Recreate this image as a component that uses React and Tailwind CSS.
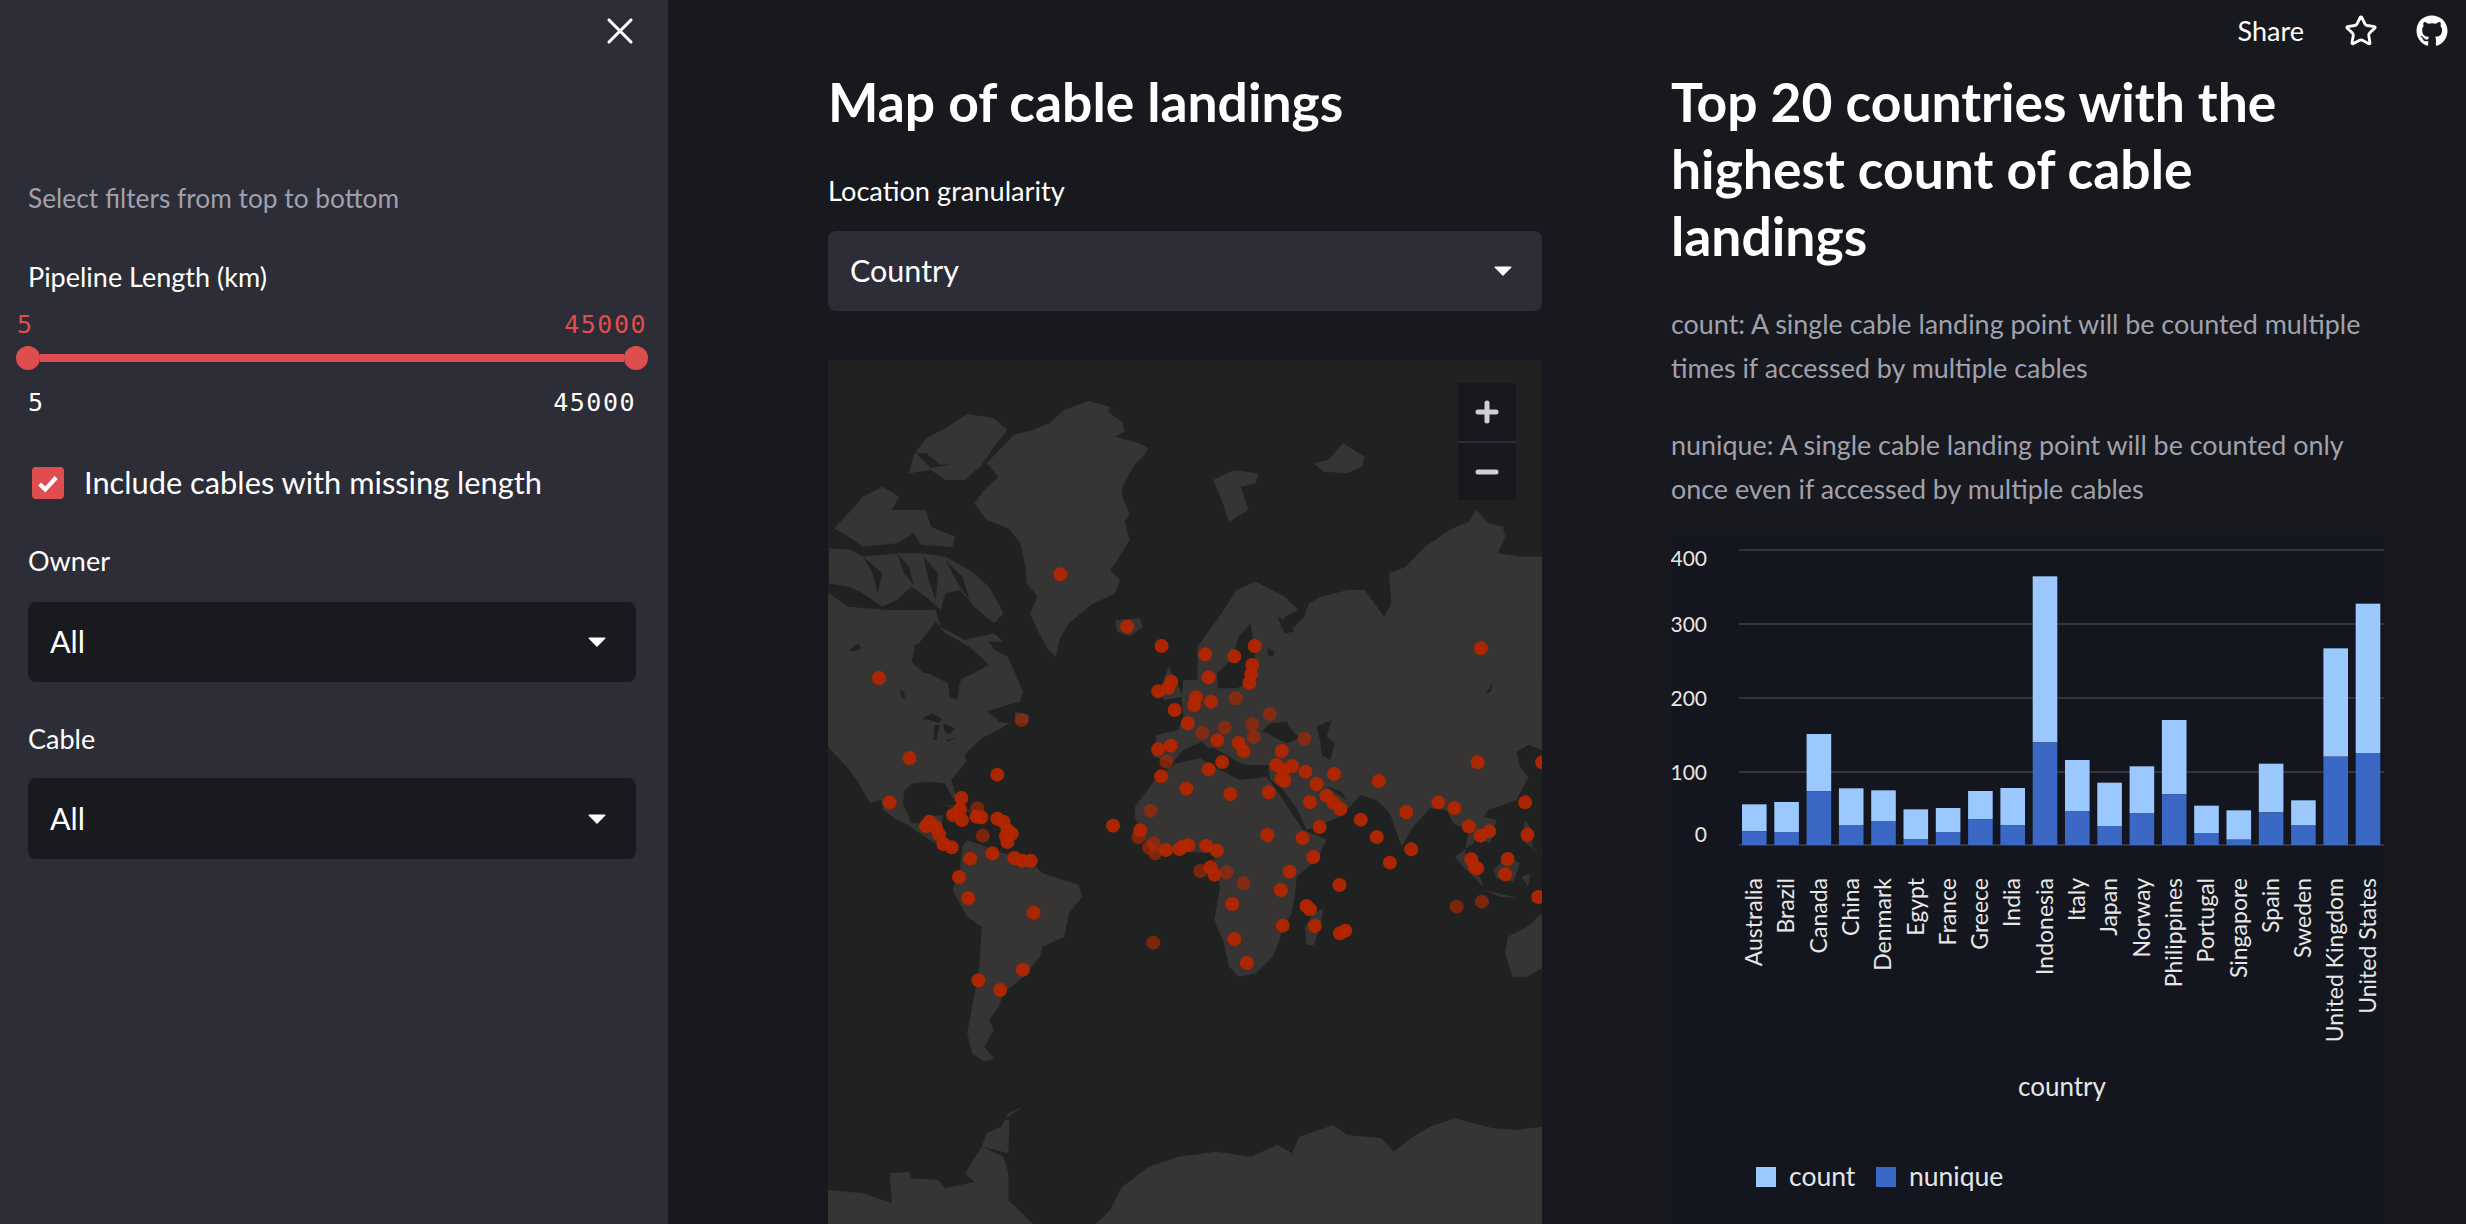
import React from 'react';
import { Star, X } from 'lucide-react';
import { FaGithub } from 'react-icons/fa';

// map data is read straight off crops of the picture, so each group has its own transform
const Z3 = 'translate(800 340) scale(.4847 .3333)';
const Z4 = 'translate(800 780) scale(.4847 .3333)';
const Z9 = 'translate(1100 680) scale(.3333)';
const Z10 = 'translate(828 640) scale(.3333)';

const LAND = '#363534';
const SEA = '#202222';

const land3 = [
  '595,183 640,200 635,215 665,245 670,275 650,290 700,310 718,325 710,345 690,375 680,400 665,440 665,470 680,520 670,545 680,600 655,660 640,690 660,720 650,760 600,795 555,850 535,900 528,950 510,925 490,870 475,820 490,770 468,730 465,680 455,610 430,565 385,540 360,490 380,450 410,410 385,370 425,310 440,285 480,270 515,250 545,210',
  '345,222 400,235 428,270 400,320 375,375 340,420 300,420 270,390 225,400 235,345 260,295 300,265',
  '170,440 205,470 190,510 260,510 270,560 320,590 315,620 250,615 235,580 200,610 130,620 100,590 70,565 100,520 130,470',
  '60,625 105,630 130,650 200,640 250,640 300,650 350,690 390,740 420,820 400,850 360,800 330,750 300,760 290,810 260,770 230,740 200,780 170,800 130,760 100,740 60,730',
  '58,760 100,800 180,810 280,810 290,860 340,900 400,880 420,905 58,905',
  '895,390 945,400 940,430 910,440 925,510 885,545 870,480 852,420',
  '1060,370 1090,360 1120,310 1165,350 1160,380 1130,400 1080,395',
  '650,840 700,835 708,860 680,890 655,875',
  '745,1040 760,980 775,1020 790,1070 750,1080',
  '820,920 870,820 900,750 940,725 1000,770 1028,810 1000,830 990,860 1010,875 1040,830 1050,790 1075,770 1130,750 1165,750 1205,830 1220,790 1215,700 1250,680 1290,620 1340,570 1380,545 1395,510 1420,550 1450,560 1455,590 1440,640 1490,650 1531,650 1531,1200 820,1200',
];

const sea3 = [
  '280,845 240,920 230,965 255,1000 300,1000 310,1060 325,1080 330,1020 390,975 350,920 300,880',
  '930,850 905,890 890,960 860,1000 862,1045 900,1045 945,1020 940,970',
  '985,830 1010,850 1020,875 1000,880',
  '965,925 980,935 975,950 965,945',
  '1190,540 1140,590 1105,660 1095,710 1120,730 1125,680 1160,600',
  // channels through the Canadian islands
  '130,650 150,700 160,760 170,700',
  '200,640 215,700 235,735 225,680',
  '255,650 265,720 280,780 285,700',
  '300,660 330,740 350,780 335,710',
  '240,340 270,385 320,370 290,375 260,340',
];

const land10 = [
  '0,0 480,0 500,30 540,50 585,155 575,185 520,200 475,215 505,235 510,245 545,250 500,275 460,295 410,345 415,365 370,420 385,470 375,475 350,430 310,425 255,430 230,450 225,490 250,550 285,550 290,530 345,525 340,560 335,580 375,620 400,630 345,625 290,590 240,555 200,535 165,510 160,480 125,490 85,420 60,385 0,320',
  '560,215 605,225 600,250 565,250',
  '345,495 400,500 440,520 400,510',
];

const sea10 = [
  '260,15 320,0 395,0 410,100 395,130 385,180 365,170 360,130 300,100 255,70',
  '282,238 310,220 340,235 335,250 305,240',
  '320,255 335,255 325,300 315,300',
  '345,250 380,265 365,285 350,275',
  '355,300 385,292 360,305',
  '215,150 228,155 232,175 222,175',
  '65,30 90,10 100,25 75,35',
  '85,415 125,490 105,470',
];

const land4 = [
  '345,180 420,220 475,240 500,280 575,315 582,350 555,400 545,470 500,500 495,530 460,590 420,640 410,680 390,720 400,750 380,800 400,835 380,845 355,820 345,760 355,680 370,560 375,440 345,410 315,330 330,270 335,200',
  '1080,385 1075,430 1060,495 1045,495 1042,440 1060,400',
  '1531,400 1500,440 1460,470 1455,520 1470,590 1500,590 1531,565',
  '58,1230 130,1240 190,1270 185,1180 225,1175 230,1195 285,1200 300,1225 360,1205 340,1180 375,1100 390,1110 420,1130 430,1180 430,1260 480,1332 58,1332',
  '420,1020 460,980 430,1000 415,1040 385,1060 375,1100 430,1120 432,1020',
  '610,1332 640,1290 665,1220 720,1160 780,1130 860,1115 930,1130 985,1095 1015,1120 1030,1070 1100,1035 1130,1065 1200,1075 1225,1115 1260,1075 1300,1040 1350,1015 1430,1045 1480,1050 1531,1040 1531,1332',
];

const eurasia9 = '250,0 245,50 250,110 235,150 170,165 160,230 215,250 500,290 550,330 590,385 620,450 720,410 760,370 780,345 830,360 870,400 905,500 940,440 990,385 1040,390 1060,430 1105,450 1095,520 1145,600 1150,620 1090,560 1065,530 1120,490 1130,470 1170,490 1190,420 1150,410 1165,390 1250,360 1285,290 1260,260 1250,215 1285,195 1326,210 1326,0';

const sea9 = [
  '215,250 250,210 305,185 325,205 345,205 420,250 445,255 505,255 510,300 420,310 350,275 300,245',
  '485,155 510,130 560,125 575,150 600,175 560,190 500,160',
  '650,140 695,120 680,170 705,190 690,240 665,225 660,180',
  '680,320 740,360 725,335',
  '1155,45 1180,5 1172,35',
];

const africa9 = '230,250 300,235 350,265 420,300 500,290 530,330 575,400 610,450 680,478 650,540 590,590 585,640 575,700 545,750 539,780 518,830 467,880 416,890 387,860 372,790 343,720 360,620 340,520 240,515 165,520 125,470 105,410 105,380 150,320 170,290';

const islands9 = [
  '1180,570 1220,530 1260,550 1240,605 1190,595',
  '1275,420 1290,440 1300,510 1320,520 1265,480',
  '1265,590 1290,580 1285,620',
  '1150,630 1260,655 1200,650',
];

// [x, y, faint] in crop coordinates
const dots3 = [
  [537, 703], [675, 860], [746, 918], [836, 943], [896, 949], [938, 918], [933, 975], [931, 1003], [927, 1029],
  [843, 1012], [766, 1025], [760, 1043], [739, 1054], [817, 1072], [813, 1095], [848, 1085], [899, 1075, 1], [773, 1110],
  [800, 1150], [969, 1122, 1], [933, 1153, 1], [876, 1163, 1], [830, 1179, 1], [861, 1201], [905, 1209], [915, 1233],
  [936, 1191, 1], [994, 1233], [1041, 1196, 1], [739, 1228], [765, 1217], [756, 1265, 1], [745, 1309], [843, 1288],
  [871, 1266], [983, 1275], [1015, 1278], [997, 1290], [1043, 1295], [1102, 1302], [1194, 1323], [993, 1316], [999, 1322],
  [1066, 1332], [1405, 925], [1398, 1267], [1531, 1267], [163, 1014], [457, 1140, 1], [226, 1254], [407, 1304],
];

const dots4 = [
  [797, 26], [888, 42], [967, 37], [1052, 66], [1086, 47], [1101, 68], [1115, 87], [185, 67], [333, 54], [330, 88],
  [366, 85, 1], [316, 105], [334, 120], [364, 110], [374, 112], [407, 116], [420, 125], [428, 150], [437, 161], [428, 186],
  [425, 168], [377, 167, 1], [267, 125], [260, 138], [280, 142], [287, 163], [296, 192], [313, 202], [351, 236], [397, 220],
  [442, 234], [459, 242], [476, 242], [328, 291], [347, 354], [482, 398], [460, 569], [368, 601], [413, 630], [646, 137],
  [723, 92, 1], [702, 151], [698, 172, 1], [730, 190, 1], [720, 203, 1], [733, 220, 1], [755, 210], [783, 207], [790, 200],
  [801, 196], [838, 197], [860, 212], [847, 262], [826, 273, 1], [855, 284], [880, 277, 1], [915, 310, 1], [964, 165],
  [1037, 174], [1072, 141], [1059, 231], [1010, 275], [992, 330], [892, 372], [996, 437], [896, 477], [922, 549],
  [729, 488, 1], [1045, 378], [1052, 388], [1062, 438], [1113, 315], [1114, 460], [1125, 452], [1157, 119], [1190, 171],
  [1251, 96], [1261, 208], [1217, 248], [1317, 67], [1350, 84], [1380, 139], [1404, 167], [1422, 154], [1496, 67],
  [1501, 164], [1385, 238], [1393, 262], [1397, 265], [1460, 237], [1455, 283], [1523, 351], [1355, 380, 1], [1407, 365, 1],
];

const bars = [
  ['Australia', 823, 904], ['Brazil', 816, 906], ['Canada', 612, 784], ['China', 775, 885], ['Denmark', 781, 873],
  ['Egypt', 838, 927], ['France', 834, 906], ['Greece', 783, 868], ['India', 774, 886], ['Indonesia', 139, 637],
  ['Italy', 690, 843], ['Japan', 758, 888], ['Norway', 709, 849], ['Philippines', 570, 793], ['Portugal', 827, 909],
  ['Singapore', 841, 929], ['Spain', 701, 847], ['Sweden', 811, 885], ['United Kingdom', 355, 680], ['United States', 221, 669],
];

const ticks = [
  ['400', 550, 558], ['300', 624, 624], ['200', 698, 698], ['100', 772, 772], ['0', 845, 834],
];

const Polys = ({ items, fill, transform }) => (
  <g transform={transform} fill={fill}>
    {items.map((p, i) => <polygon key={i} points={p} />)}
  </g>
);

const Dot = ({ d, oy }) => (
  <circle
    cx={800 + d[0] * 0.4847}
    cy={oy + d[1] / 3}
    r="7"
    fill="#b32600"
    opacity={d[2] ? 0.62 : 0.95}
  />
);

const WorldMap = () => (
  <svg viewBox="828 360 714 864" className="block w-full h-full">
    <rect x="828" y="360" width="714" height="864" fill={SEA} />
    <Polys items={land3} fill={LAND} transform={Z3} />
    <Polys items={land10} fill={LAND} transform={Z10} />
    <Polys items={[eurasia9]} fill={LAND} transform={Z9} />
    <Polys items={sea3} fill={SEA} transform={Z3} />
    <Polys items={sea10} fill={SEA} transform={Z10} />
    <Polys items={sea9} fill={SEA} transform={Z9} />
    <Polys items={[africa9, ...islands9]} fill={LAND} transform={Z9} />
    <Polys items={land4} fill={LAND} transform={Z4} />
    {dots3.map((d, i) => <Dot key={i} d={d} oy={340} />)}
    {dots4.map((d, i) => <Dot key={i} d={d} oy={780} />)}
  </svg>
);

const Chart = () => (
  <svg viewBox="1671 535 713 689" className="block w-full h-[689px]">
    <rect x="1671" y="535" width="713" height="689" fill="#13161e" />
    {ticks.map(([label, y, ty]) => (
      <g key={label}>
        <line x1="1739" x2="2384" y1={y} y2={y} stroke="#33343e" strokeWidth="2" />
        <text x="1707" y={ty + 8} textAnchor="end" fontSize="21" fill="#e6e6e6">{label}</text>
      </g>
    ))}
    {bars.map(([name, top, mid], i) => {
      const x = 1742 + i * 32.3;
      const yTop = 530 + top / 3;
      const yMid = 530 + mid / 3;
      return (
        <g key={name}>
          <rect x={x} y={yTop} width="24.6" height={yMid - yTop} fill="#9bc9ff" />
          <rect x={x} y={yMid} width="24.6" height={845 - yMid} fill="#3b68c4" />
          <text
            transform={`translate(${x + 20} 878) rotate(-90)`}
            textAnchor="end"
            fontSize="23"
            fill="#e6e6e6"
          >
            {name}
          </text>
        </g>
      );
    })}
    <text x="2062" y="1096" textAnchor="middle" fontSize="26" fill="#e6e6e6">country</text>
    <rect x="1756" y="1167" width="20" height="20" fill="#9bc9ff" />
    <text x="1789" y="1186" fontSize="26.5" fill="#e6e6e6">count</text>
    <rect x="1876" y="1167" width="20" height="20" fill="#3b68c4" />
    <text x="1909" y="1186" fontSize="26.5" fill="#e6e6e6">nunique</text>
  </svg>
);

const Caret = () => (
  <svg viewBox="0 0 18 10" className="w-[18px] h-[10px] fill-white">
    <path d="M1 0.5h16a.6.6 0 0 1 .4 1L9.5 9.5a.7.7 0 0 1-1 0L.6 1.5a.6.6 0 0 1 .4-1z" />
  </svg>
);

const Select = ({ value, className }) => (
  <div className={`flex items-center justify-between rounded-lg text-[30.5px] text-white ${className}`}>
    <span>{value}</span>
    <Caret />
  </div>
);

const Sidebar = () => (
  <aside className="w-[668px] shrink-0 bg-[#2c2d36] text-white">
    <div className="h-[62px] flex items-center justify-end pr-[26px]">
      <X className="w-[44px] h-[44px] text-white" strokeWidth={1.7} />
    </div>
    <div className="px-[28px] pr-[32px]">
      <p className="mt-[114px] text-[26.3px] leading-[44px] text-[#a0a1ad]">Select filters from top to bottom</p>
      <p className="mt-[39px] text-[27px] leading-[36px]">Pipeline Length (km)</p>
      <div className="mt-[12px] -mx-[11px] flex justify-between font-['DejaVu_Sans_Mono',monospace] text-[25px] tracking-[1.5px] leading-[36px] text-[#e04d4f]">
        <span>5</span>
        <span>45000</span>
      </div>
      <div className="mt-[3px] -mx-3 flex items-center h-6">
        <div className="w-6 h-6 rounded-full bg-[#e04d4f]" />
        <div className="flex-1 h-2 bg-[#e04d4f]" />
        <div className="w-6 h-6 rounded-full bg-[#e04d4f]" />
      </div>
      <div className="mt-[15px] flex justify-between font-['DejaVu_Sans_Mono',monospace] text-[25px] tracking-[1.5px] leading-[36px]">
        <span>5</span>
        <span>45000</span>
      </div>
      <label className="mt-[44px] pl-1 flex items-center gap-[20px] text-[30.8px] leading-[36px]">
        <span className="w-8 h-8 rounded-[4px] bg-[#e04d4f] flex items-center justify-center">
          <svg viewBox="0 0 24 24" className="w-[22px] h-[22px] fill-none stroke-white stroke-[4.5]">
            <path d="M3 13l6 6L21 6" />
          </svg>
        </span>
        Include cables with missing length
      </label>
      <p className="mt-[42px] text-[27px] leading-[36px]">Owner</p>
      <Select value="All" className="mt-[23px] h-[80px] bg-[#181a1f] pl-[22px] pr-[30px]" />
      <p className="mt-[39px] text-[27px] leading-[36px]">Cable</p>
      <Select value="All" className="mt-[21px] h-[81px] bg-[#181a1f] pl-[22px] pr-[30px]" />
    </div>
  </aside>
);

export default function App() {
  return (
    <div className="relative flex h-[1224px] overflow-hidden bg-[#17191f] text-white font-[Lato,sans-serif]">
      <Sidebar />

      <main className="flex-1 flex pl-[160px] gap-[129px]">
        <section className="w-[714px] pt-[68px]">
          <h1 className="text-[53.4px] leading-[67px] font-bold">Map of cable landings</h1>
          <p className="mt-[38px] text-[27.2px] leading-[36px]">Location granularity</p>
          <Select value="Country" className="mt-[22px] h-[80px] bg-[#2c2d36] pl-[22px] pr-[30px]" />
          <div className="relative mt-[49px] h-[864px]">
            <WorldMap />
            <div className="absolute left-[630px] top-[23px] w-[58px] h-[117px] bg-[#17191f] flex flex-col">
              <div className="h-[60px] flex items-center justify-center border-b-2 border-[#2c2d36]">
                <svg viewBox="0 0 24 24" className="w-6 h-6 stroke-[#d0d0d0] stroke-[5]" strokeLinecap="round">
                  <path d="M3 12h18M12 3v18" />
                </svg>
              </div>
              <div className="flex-1 flex items-center justify-center">
                <svg viewBox="0 0 24 24" className="w-6 h-6 stroke-[#d0d0d0] stroke-[5]" strokeLinecap="round">
                  <path d="M3 12h18" />
                </svg>
              </div>
            </div>
          </div>
        </section>

        <section className="w-[713px] pt-[68px]">
          <h1 className="text-[53.4px] leading-[67px] font-bold">Top 20 countries with the highest count of cable landings</h1>
          <p className="mt-[33px] text-[26.9px] leading-[44px] text-[#a0a1ad]">count: A single cable landing point will be counted multiple times if accessed by multiple cables</p>
          <p className="mt-[33px] text-[26.9px] leading-[44px] text-[#a0a1ad]">nunique: A single cable landing point will be counted only once even if accessed by multiple cables</p>
          <div className="mt-[24px]">
            <Chart />
          </div>
        </section>
      </main>

      <div className="absolute top-0 right-[18px] h-[62px] flex items-center text-white">
        <span className="text-[27px]">Share</span>
        <Star className="ml-[40px] w-[34px] h-[34px]" strokeWidth={2} />
        <FaGithub className="ml-[38px] w-[32px] h-[32px]" />
      </div>
    </div>
  );
}
